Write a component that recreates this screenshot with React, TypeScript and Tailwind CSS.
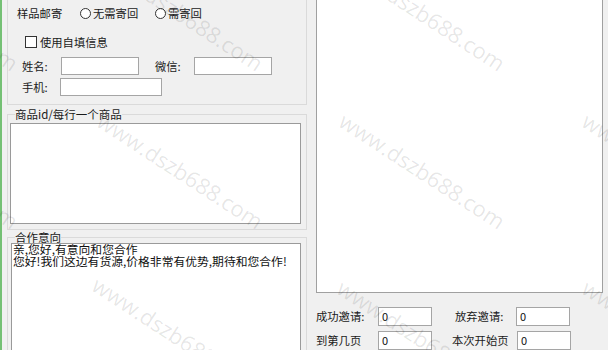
import React from "react";

const cjk = { fontFamily: '"Noto Sans CJK SC", "Noto Sans", sans-serif' };

function Radio({ label }: { label: string }) {
  return (
    <div className="flex items-center">
      <span className="w-[11px] h-[11px] rounded-full border border-[#333] bg-white" />
      <span className="ml-[2px]">{label}</span>
    </div>
  );
}

function Field({ className }: { className: string }) {
  return <div className={`h-[18px] border border-[#a5a5a5] bg-white ${className}`} />;
}

function NumBox() {
  return (
    <div className="w-[54px] h-[19px] border border-[#a5a5a5] bg-white pl-[3px] pt-[1px] text-[11px] leading-[14px] text-[#111]">
      0
    </div>
  );
}

export default function App() {
  return (
    <div
      className="relative w-[608px] h-[350px] overflow-hidden bg-[#f0f0f0] text-[11.3px] text-[#1a1a1a] flex"
      style={cjk}
    >
      <div className="w-[2px] h-full bg-[#74c074]" />

      {/* 左侧 */}
      <div className="w-[308px] pl-[5px] flex flex-col">
        <div className="shrink-0 -mt-[10px] h-[115px] w-[300px] border border-[#dadada] pt-[14px]">
          <div className="flex items-center h-[16px] pl-[9px]">
            <span className="w-[63px]">样品邮寄</span>
            <div className="w-[75px]">
              <Radio label="无需寄回" />
            </div>
            <Radio label="需寄回" />
          </div>

          <div className="mt-[13px] flex items-center h-[16px] pl-[17px]">
            <span className="w-[12px] h-[12px] border border-[#333] bg-white" />
            <span className="ml-[3px]">使用自填信息</span>
          </div>

          <div className="mt-[7px] flex items-center h-[18px] pl-[14px]">
            <span className="w-[39px]">姓名:</span>
            <Field className="w-[78px]" />
            <span className="ml-[16px] w-[39px]">微信:</span>
            <Field className="w-[78px]" />
          </div>

          <div className="mt-[3px] flex items-center h-[18px] pl-[14px]">
            <span className="w-[38px]">手机:</span>
            <Field className="w-[102px]" />
          </div>
        </div>

        <fieldset className="shrink-0 mt-[2px] w-[300px] border border-[#dadada] pb-[5px]">
          <legend className="ml-[7px] text-[11.5px] leading-[14px]">商品id/每行一个商品</legend>
          <div className="mt-[2px] ml-[2px] w-[291px] h-[101px] border border-[#9a9a9a] bg-white" />
        </fieldset>

        <fieldset className="shrink-0 w-[300px] border border-[#dadada]">
          <legend className="ml-[7px] text-[11.5px] leading-[14px]">合作意向</legend>
          <div className="-mt-[1px] ml-[3px] w-[290px] h-[120px] border border-[#9a9a9a] bg-white pl-[1px] text-[11.8px] leading-[12px] text-[#111]">
            <div className="-mt-[1px]">亲,您好,有意向和您合作</div>
            <div>您好!我们这边有货源,价格非常有优势,期待和您合作!</div>
          </div>
        </fieldset>
      </div>

      {/* 右侧 */}
      <div className="flex-1 flex flex-col">
        <div className="shrink-0 -mt-[2px] ml-[6px] w-[287px] h-[295px] border border-[#a0a0a0] bg-white" />

        <div className="shrink-0 mt-[14px] ml-[6px] flex items-center h-[19px]">
          <span className="w-[62px]">成功邀请:</span>
          <NumBox />
          <span className="ml-[23px] w-[61px]">放弃邀请:</span>
          <NumBox />
        </div>

        <div className="shrink-0 mt-[5px] ml-[6px] flex items-center h-[19px]">
          <span className="w-[62px]">到第几页</span>
          <NumBox />
          <span className="ml-[20px] w-[65px]">本次开始页</span>
          <NumBox />
        </div>
      </div>

      {/* 水印 */}
      <div
        className="pointer-events-none absolute inset-0 text-[22px] leading-[22px] text-black/10"
        style={{ fontFamily: '"Open Sans", sans-serif' }}
      >
        <span className="absolute left-[-145px] top-[-51px] origin-left rotate-[33deg] whitespace-nowrap">www.dszb688.com</span>
        <span className="absolute left-[100px] top-[-51px] origin-left rotate-[33deg] whitespace-nowrap">www.dszb688.com</span>
        <span className="absolute left-[342px] top-[-51px] origin-left rotate-[33deg] whitespace-nowrap">www.dszb688.com</span>
        <span className="absolute left-[585px] top-[-51px] origin-left rotate-[33deg] whitespace-nowrap">www.dszb688.com</span>
        <span className="absolute left-[-145px] top-[107px] origin-left rotate-[33deg] whitespace-nowrap">www.dszb688.com</span>
        <span className="absolute left-[100px] top-[107px] origin-left rotate-[33deg] whitespace-nowrap">www.dszb688.com</span>
        <span className="absolute left-[342px] top-[107px] origin-left rotate-[33deg] whitespace-nowrap">www.dszb688.com</span>
        <span className="absolute left-[585px] top-[107px] origin-left rotate-[33deg] whitespace-nowrap">www.dszb688.com</span>
        <span className="absolute left-[-145px] top-[271px] origin-left rotate-[33deg] whitespace-nowrap">www.dszb688.com</span>
        <span className="absolute left-[95px] top-[271px] origin-left rotate-[33deg] whitespace-nowrap">www.dszb688.com</span>
        <span className="absolute left-[340px] top-[274px] origin-left rotate-[33deg] whitespace-nowrap">www.dszb688.com</span>
        <span className="absolute left-[585px] top-[274px] origin-left rotate-[33deg] whitespace-nowrap">www.dszb688.com</span>
      </div>
    </div>
  );
}
